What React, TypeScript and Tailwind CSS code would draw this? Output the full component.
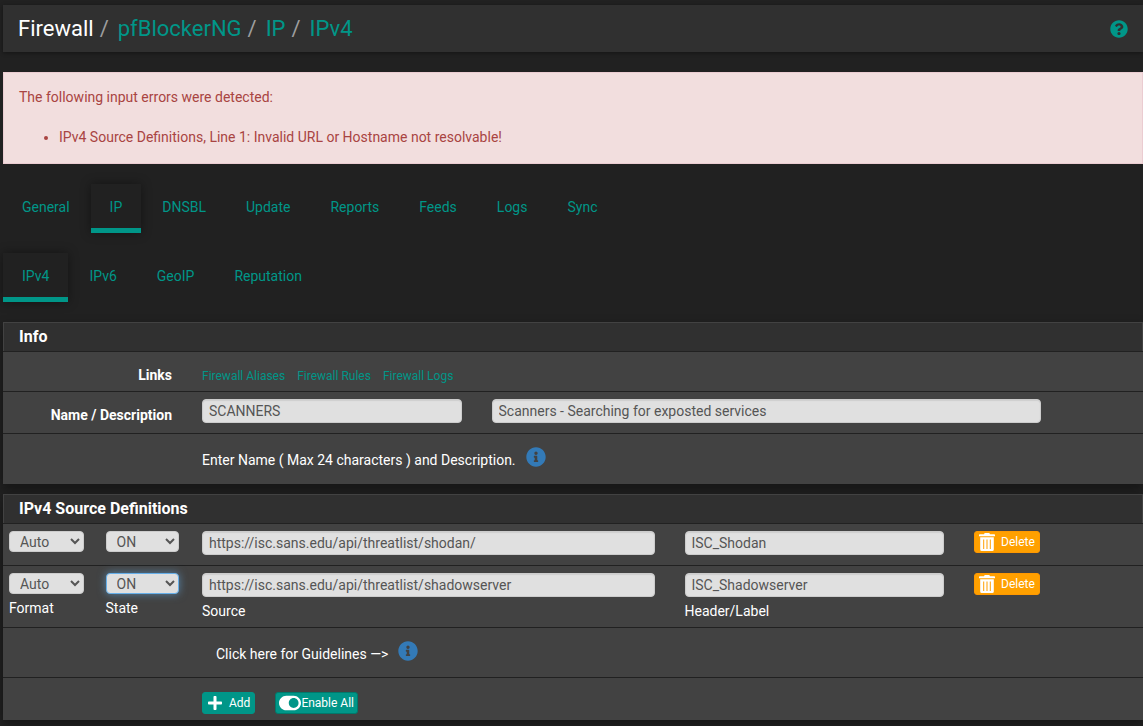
import { useState } from 'react';
import { FaInfoCircle, FaPlus, FaQuestionCircle, FaToggleOn } from 'react-icons/fa';

interface Source {
  id: number;
  format: string;
  state: string;
  url: string;
  header: string;
}

const mainTabs = ['General', 'IP', 'DNSBL', 'Update', 'Reports', 'Feeds', 'Logs', 'Sync'];
const ipTabs = ['IPv4', 'IPv6', 'GeoIP', 'Reputation'];
const links = ['Firewall Aliases', 'Firewall Rules', 'Firewall Logs'];
const crumbs = ['pfBlockerNG', 'IP', 'IPv4'];

const initialSources: Source[] = [
  { id: 1, format: 'Auto', state: 'ON', url: 'https://isc.sans.edu/api/threatlist/shodan/', header: 'ISC_Shodan' },
  { id: 2, format: 'Auto', state: 'ON', url: 'https://isc.sans.edu/api/threatlist/shadowserver', header: 'ISC_Shadowserver' },
];

const inputClass =
  'block w-full h-6 rounded border border-[#ccc] bg-[#e0e0e0] px-1.5 text-sm text-[#555] shadow-[inset_0_1px_1px_rgba(0,0,0,0.08)] focus:outline-none focus:border-[#66afe9]';
const selectClass =
  'block h-[21px] rounded border bg-[#e0e0e0] pl-1.5 text-sm leading-[19px] text-[#555] focus:outline-none';
const buttonClass = 'flex h-[22px] items-center rounded-[3px] border text-xs text-white';
const rowClass = 'grid grid-cols-12 -mx-[9px]';

function TrashIcon() {
  return (
    <svg viewBox="0 0 16 18" className="h-[18px] w-4" fill="currentColor" aria-hidden="true">
      <path
        fillRule="evenodd"
        d="M5 1.2Q5.2 0 6.3 0h3.4Q10.800 0 11 1.200h4.300q.7 0 .7.700v1.300H0V1.900q0-.7.7-.7zM1.200 4.200h13.600V16.500Q14.800 18 13.300 18H2.700Q1.200 18 1.200 16.500zM4.200 6.500v9.500h1V6.500zM7.500 6.500v9.500h1V6.500zM10.800 6.500v9.500h1V6.500z"
      />
    </svg>
  );
}

function Tabs({ items, active }: { items: string[]; active: string }) {
  return (
    <nav className="flex gap-0.5">
      {items.map((item) => (
        <a
          key={item}
          href="#"
          className={`h-[49px] px-[19px] pt-[13px] leading-5 text-[#009688] ${
            item === active ? 'border-b-[5px] border-[#009688] shadow-[0_0_10px_rgba(0,0,0,0.4)]' : ''
          }`}
        >
          {item}
        </a>
      ))}
    </nav>
  );
}

function Panel({ title, children }: { title: string; children: React.ReactNode }) {
  return (
    <section className="bg-[#424242] shadow-[0_4px_10px_rgba(0,0,0,0.4)]">
      <h2 className="h-[29px] border border-b-0 border-[#424242] bg-[#303030] px-[15px] text-base leading-7 font-bold">
        {title}
      </h2>
      {children}
    </section>
  );
}

function InfoButton({ label }: { label: string }) {
  return (
    <button type="button" aria-label={label} className="self-start text-[#337ab7]">
      <FaInfoCircle className="size-5" />
    </button>
  );
}

export default function App() {
  const [name, setName] = useState('SCANNERS');
  const [description, setDescription] = useState('Scanners - Searching for exposted services');
  const [sources, setSources] = useState(initialSources);

  const updateSource = (id: number, changes: Partial<Source>) => {
    setSources(sources.map((s) => (s.id === id ? { ...s, ...changes } : s)));
  };

  const addSource = () => {
    setSources([...sources, { id: Date.now(), format: 'Auto', state: 'OFF', url: '', header: '' }]);
  };

  return (
    <div className="min-h-screen overflow-hidden bg-[#212121] pt-[5px] pb-1.5 pl-[3px] font-[Roboto,sans-serif] text-sm text-white">
      <header className="flex h-[47px] items-center justify-between bg-[#303030] px-[15px] shadow-[0_1px_4px_rgba(0,0,0,0.4)]">
        <nav className="flex text-[22px] leading-6">
          <span>Firewall</span>
          {crumbs.map((crumb) => (
            <span key={crumb} className="flex">
              <span className="pr-[9px] pl-1.5 text-[#9e9e9e]">/</span>
              <a href="#" className="text-[#009688]">{crumb}</a>
            </span>
          ))}
        </nav>
        <a href="#" aria-label="Help" className="text-[#009688]">
          <FaQuestionCircle className="size-[18px]" />
        </a>
      </header>

      <div role="alert" className="mt-5 border border-[#ebccd1] bg-[#f2dede] px-[15px] pt-3.5 pb-4 leading-5 text-[#a94442]">
        <p>The following input errors were detected:</p>
        <ul className="mt-5 list-disc pl-10">
          <li>IPv4 Source Definitions, Line 1: Invalid URL or Hostname not resolvable!</li>
        </ul>
      </div>

      <div className="mt-5 mb-5 flex flex-col gap-5">
        <Tabs items={mainTabs} active="IP" />
        <Tabs items={ipTabs} active="IPv4" />
      </div>

      <div className="flex flex-col gap-2.5">
        <Panel title="Info">
          <div className="border-t border-[#212121]">
            <div className={`${rowClass} h-[39px] pt-[13px]`}>
              <span className="col-span-2 px-[15px] text-right font-bold">Links</span>
              <div className="col-span-10 flex gap-3 px-[15px] text-xs leading-[22px]">
                {links.map((link) => (
                  <a key={link} href="#" className="text-[#009688]">{link}</a>
                ))}
              </div>
            </div>
          </div>
          <div className="border-t border-[#212121]">
            <div className={`${rowClass} h-[41px] pt-[7px]`}>
              <label htmlFor="name" className="col-span-2 px-[15px] pt-1.5 text-right font-bold">
                Name / Description
              </label>
              <div className="col-span-3 px-[15px]">
                <input id="name" className={inputClass} value={name} onChange={(e) => setName(e.target.value)} />
              </div>
              <div className="col-span-6 px-[15px]">
                <input
                  aria-label="Description"
                  className={inputClass}
                  value={description}
                  onChange={(e) => setDescription(e.target.value)}
                />
              </div>
            </div>
          </div>
          <div className="border-t border-[#212121]">
            <div className={`${rowClass} h-[50px] pt-[13px]`}>
              <div className="col-span-10 col-start-3 flex gap-2.5 px-[15px]">
                <span className="pt-[3px]">Enter Name ( Max 24 characters ) and Description.</span>
                <InfoButton label="Name info" />
              </div>
            </div>
          </div>
        </Panel>

        <Panel title="IPv4 Source Definitions">
          {sources.map((source, i) => {
            const last = i === sources.length - 1;
            return (
              <div key={source.id} className="border-t border-[#212121]">
                <div className={`${rowClass} pt-[7px] ${last ? 'h-[61px]' : 'h-[41px]'}`}>
                  <label className="px-[15px]">
                    <select
                      aria-label="Format"
                      className={`${selectClass} w-[75px] border-[#ccc]`}
                      value={source.format}
                      onChange={(e) => updateSource(source.id, { format: e.target.value })}
                    >
                      <option>Auto</option>
                      <option>Regex</option>
                    </select>
                    {last && <span className="mt-1 block">Format</span>}
                  </label>
                  <label className="px-[15px]">
                    <select
                      aria-label="State"
                      className={`${selectClass} w-[73px] ${
                        last ? 'border-[#66afe9] shadow-[0_0_8px_rgba(102,175,233,0.6)]' : 'border-[#ccc]'
                      }`}
                      value={source.state}
                      onChange={(e) => updateSource(source.id, { state: e.target.value })}
                    >
                      <option>ON</option>
                      <option>OFF</option>
                    </select>
                    {last && <span className="mt-1 block">State</span>}
                  </label>
                  <label className="col-span-5 px-[15px]">
                    <input
                      aria-label="Source"
                      className={inputClass}
                      value={source.url}
                      onChange={(e) => updateSource(source.id, { url: e.target.value })}
                    />
                    {last && <span className="mt-1 block">Source</span>}
                  </label>
                  <label className="col-span-3 px-[15px]">
                    <input
                      aria-label="Header/Label"
                      className={inputClass}
                      value={source.header}
                      onChange={(e) => updateSource(source.id, { header: e.target.value })}
                    />
                    {last && <span className="mt-1 block">Header/Label</span>}
                  </label>
                  <div className="px-[15px]">
                    <button
                      type="button"
                      className={`${buttonClass} gap-1.5 border-[#ff9800] bg-[#ffa000] px-1`}
                      onClick={() => setSources(sources.filter((s) => s.id !== source.id))}
                    >
                      <TrashIcon />
                      Delete
                    </button>
                  </div>
                </div>
              </div>
            );
          })}
          <div className="border-t border-[#212121]">
            <div className={`${rowClass} h-[49px] pt-[13px]`}>
              <div className="col-span-10 col-start-3 flex gap-2.5 pr-[15px] pl-[29px]">
                <span className="pt-[3px]">Click here for Guidelines —&gt;</span>
                <InfoButton label="Guidelines" />
              </div>
            </div>
          </div>
          <div className="border-t border-[#212121]">
            <div className={`${rowClass} h-[42px] pt-3.5`}>
              <div className="col-span-10 col-start-3 flex gap-5 px-[15px]">
                <button type="button" onClick={addSource} className={`${buttonClass} gap-1.5 border-[#009688] bg-[#009688] px-1`}>
                  <FaPlus className="size-4" />
                  Add
                </button>
                <button
                  type="button"
                  onClick={() => setSources(sources.map((s) => ({ ...s, state: 'ON' })))}
                  className={`${buttonClass} border-[#00796b] bg-[#009688] px-[3px]`}
                >
                  <FaToggleOn className="size-[22px]" />
                  Enable All
                </button>
              </div>
            </div>
          </div>
        </Panel>
      </div>
    </div>
  );
}
